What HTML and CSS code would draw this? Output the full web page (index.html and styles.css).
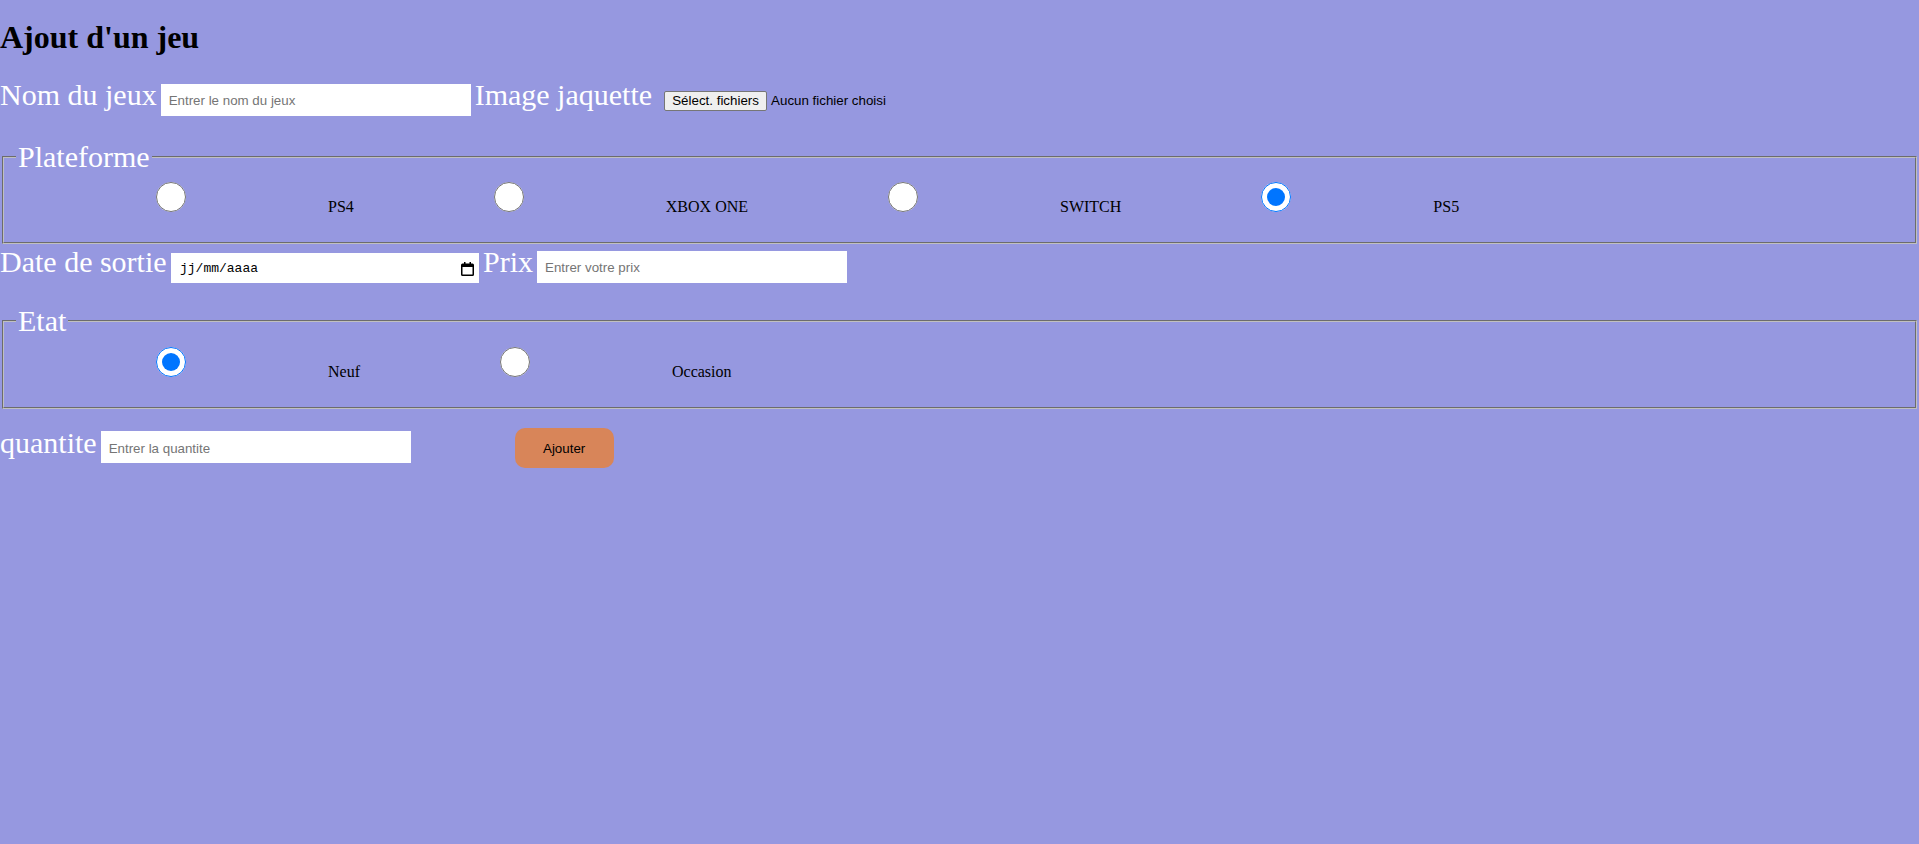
FILE: index.html
```html
<!DOCTYPE html>
<html lang="fr">
<head>
<meta charset="utf-8">
<title>Ajout d'un jeu</title>
<link rel="stylesheet" href="styles.css">
</head>
<body>
<h1 class="title">Ajout d'un jeu</h1>
<form class="game-form">
  <div class="row row-first">
    <label class="field-label" for="nom">Nom du jeux</label>
    <input class="text-input gap-s" id="nom" type="text" placeholder="Entrer le nom du jeux">
    <label class="field-label gap-s">Image jaquette</label>
    <button type="button" class="file-btn">Sélect. fichiers</button>
    <span class="file-name">Aucun fichier choisi</span>
  </div>

  <fieldset class="group group-plateforme">
    <legend class="group-legend">Plateforme</legend>
    <div class="options"><input class="radio" type="radio" name="plateforme" id="ps4"><label class="option-label" for="ps4">PS4</label><input class="radio" type="radio" name="plateforme" id="xbox"><label class="option-label" for="xbox">XBOX ONE</label><input class="radio" type="radio" name="plateforme" id="switch"><label class="option-label" for="switch">SWITCH</label><input class="radio" type="radio" name="plateforme" id="ps5" checked><label class="option-label" for="ps5">PS5</label></div>
  </fieldset>

  <div class="row row-date">
    <label class="field-label">Date de sortie</label>
    <div class="date-field">
      <span class="date-text">jj/mm/aaaa</span>
      <svg class="cal-icon" width="13" height="14" viewBox="0 0 13 14" aria-hidden="true"><path fill="#000" fill-rule="evenodd" d="M3 0h1.5v1.5h4V0H10v1.5h1.5A1.5 1.5 0 0 1 13 3v9.5A1.5 1.5 0 0 1 11.5 14h-10A1.5 1.5 0 0 1 0 12.5V3a1.5 1.5 0 0 1 1.5-1.5H3zM1.5 5v7.5h10V5z"/></svg>
    </div>
    <label class="field-label gap-s" for="prix">Prix</label>
    <input class="text-input gap-s" id="prix" type="text" placeholder="Entrer votre prix">
  </div>

  <fieldset class="group group-etat">
    <legend class="group-legend">Etat</legend>
    <div class="options"><input class="radio" type="radio" name="etat" id="neuf" checked><label class="option-label" for="neuf">Neuf</label><input class="radio" type="radio" name="etat" id="occasion"><label class="option-label" for="occasion">Occasion</label></div>
  </fieldset>

  <div class="row row-last">
    <label class="field-label" for="qte">quantite</label>
    <input class="text-input gap-s" id="qte" type="text" placeholder="Entrer la quantite">
    <button type="button" class="submit-btn">Ajouter</button>
  </div>
</form>
</body>
</html>
```

FILE: styles.css
```css
html, body {
  margin: 0;
  padding: 0;
  background: #9698e0;
}

body {
  font-family: "Liberation Serif", "Times New Roman", serif;
  font-size: 16px;
  color: #000;
  min-height: 844px;
}

.title {
  font-size: 32px;
  font-weight: bold;
  margin: 19px 0 22px;
  line-height: normal;
}

.game-form {
  margin: 0;
}

.row {
  display: flex;
  align-items: baseline;
}

.row-first {
  margin-bottom: 24px;
}

.row-date {
  margin-top: 1px;
  margin-bottom: 21px;
}

.row-last {
  margin-top: 17px;
}

.field-label {
  font-size: 30px;
  color: #fff;
  line-height: normal;
}

.gap-s {
  margin-left: 4px;
}

.text-input {
  box-sizing: border-box;
  width: 310px;
  height: 32px;
  border: none;
  padding: 2px 8px 0;
  background: #fff;
  font-family: "Liberation Sans", Arial, sans-serif;
  font-size: 13.33px;
  color: #000;
  outline: none;
}

.text-input::placeholder {
  color: #757575;
}

.file-btn {
  box-sizing: border-box;
  margin-left: 12px;
  width: 103px;
  height: 20px;
  padding: 1px 6px;
  font-family: "Liberation Sans", Arial, sans-serif;
  font-size: 13.33px;
  color: #000;
  background: #efefef;
  border: 1px solid #767676;
  border-radius: 2px;
}

.file-name {
  margin-left: 4px;
  font-family: "Liberation Sans", Arial, sans-serif;
  font-size: 13.33px;
  color: #000;
}

.group {
  margin: 0 2px;
  padding: 5.6px 12px 26px;
  border: 2px groove rgb(192, 192, 192);
}

.group-legend {
  font-size: 30px;
  color: #fff;
  padding: 0 2px;
  line-height: normal;
}

.options {
  font-size: 16px;
}

.radio {
  width: 30px;
  height: 30px;
  margin: 3px 0 0 140px;
  vertical-align: baseline;
}

.option-label {
  margin-left: 142px;
  color: #000;
}

.date-field {
  box-sizing: border-box;
  margin-left: 4.4px;
  width: 308px;
  height: 30px;
  background: #fff;
  display: inline-flex;
  align-items: center;
  justify-content: space-between;
  padding: 1px 5px 0 9px;
}

.date-text {
  font-family: "Liberation Mono", "Courier New", monospace;
  font-size: 13px;
  color: #000;
}

.cal-icon {
  display: block;
}

.submit-btn {
  box-sizing: border-box;
  margin-left: 104px;
  width: 99px;
  height: 40px;
  border: none;
  border-radius: 10px;
  background: #d88559;
  color: #000;
  font-family: "Liberation Sans", Arial, sans-serif;
  font-size: 13.33px;
  padding: 0;
}
```
